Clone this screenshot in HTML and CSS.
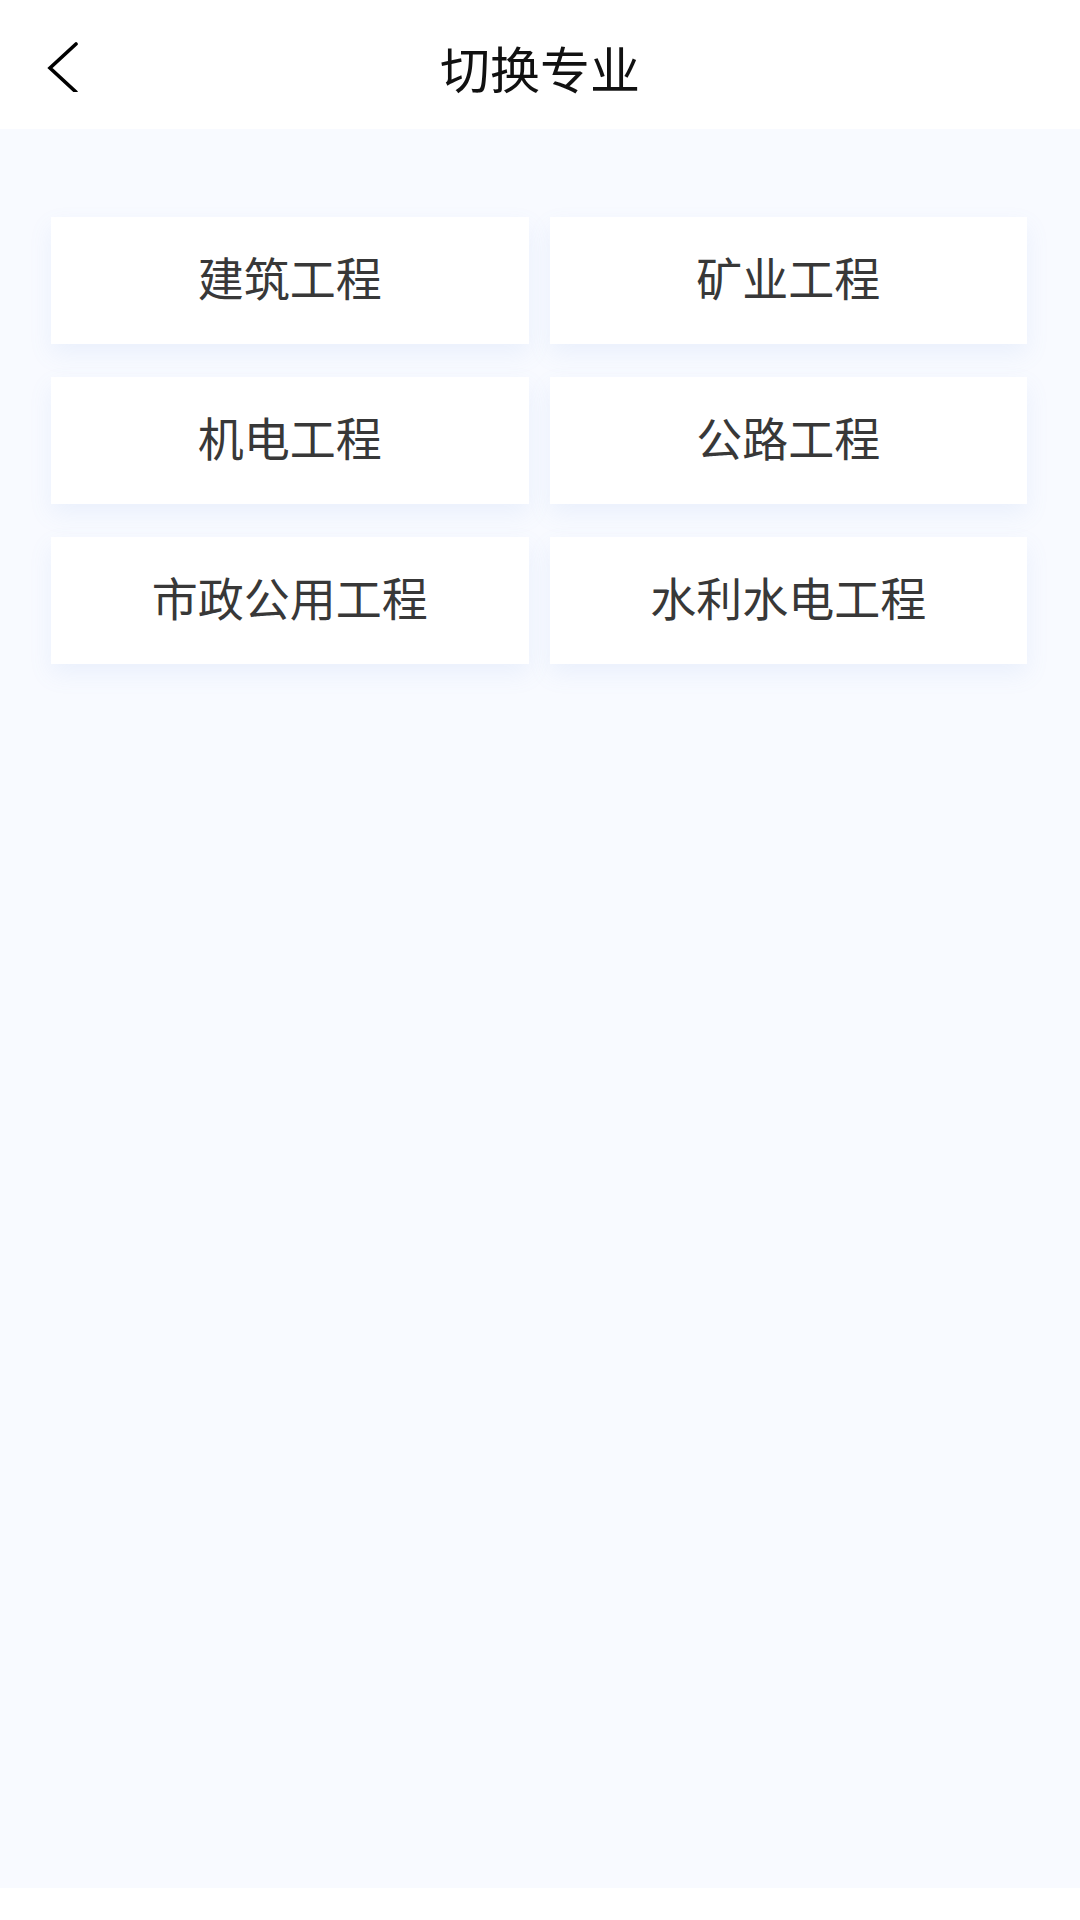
FILE: index.html
```html
<!DOCTYPE html>
<html lang="zh-CN">
<head>
<meta charset="utf-8">
<link rel="stylesheet" href="styles.css">
</head>
<body>
<div class="page">
  <header class="topbar">
    <div class="back">
      <svg width="40" height="60" viewBox="0 0 40 60"><polyline points="36,12 10,36 36,60" fill="none" stroke="#000" stroke-width="3.6" stroke-linecap="round" stroke-linejoin="miter"/></svg>
    </div>
    <h1 class="title">切换专业</h1>
  </header>
  <main class="content">
    <div class="grid">
      <div class="card">建筑工程</div>
      <div class="card">矿业工程</div>
      <div class="card">机电工程</div>
      <div class="card">公路工程</div>
      <div class="card">市政公用工程</div>
      <div class="card">水利水电工程</div>
    </div>
  </main>
  <div class="bottom-strip"></div>
</div>
</body>
</html>
```
FILE: styles.css
```css
html, body {
  margin: 0;
  padding: 0;
}
body {
  width: 1080px;
  height: 1920px;
  background: #f8faff;
  font-family: "Noto Sans CJK SC", "Noto Sans", sans-serif;
  overflow: hidden;
}
.page {
  display: flex;
  flex-direction: column;
  height: 1920px;
}
.topbar {
  position: relative;
  height: 129px;
  flex: 0 0 auto;
  background: #ffffff;
  display: flex;
  align-items: center;
  justify-content: center;
}
.back {
  position: absolute;
  left: 40px;
  top: 32px;
  width: 40px;
  height: 72px;
}
.back svg {
  display: block;
}
.title {
  margin: 0;
  font-size: 50px;
  font-weight: 400;
  color: #111111;
  line-height: 1;
  padding-top: 4px;
}
.content {
  flex: 1 1 auto;
  padding: 88px 53px 0 51px;
}
.grid {
  display: grid;
  grid-template-columns: 1fr 1fr;
  column-gap: 21px;
  row-gap: 33px;
}
.card {
  height: 127px;
  background: #ffffff;
  display: flex;
  align-items: center;
  justify-content: center;
  font-size: 46px;
  color: #383838;
  box-shadow: 0 10px 22px rgba(120, 160, 230, 0.10);
  padding-bottom: 10px;
  box-sizing: border-box;
}
.bottom-strip {
  flex: 0 0 32px;
  background: #ffffff;
}
```
